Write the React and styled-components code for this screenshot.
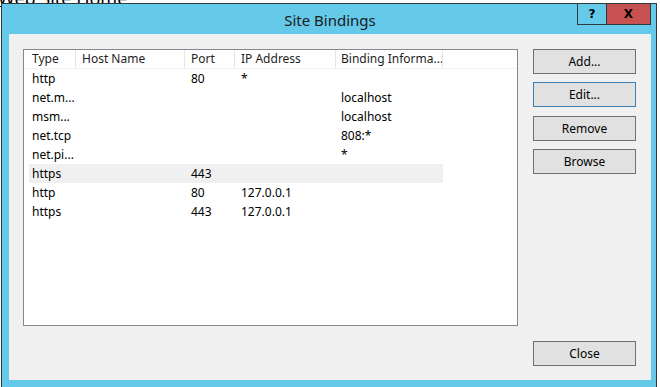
import React from "react";
import styled, { createGlobalStyle } from "styled-components";

const GlobalStyle = createGlobalStyle`
  html, body {
    margin: 0;
    padding: 0;
    background: #ffffff;
  }
  body {
    font-family: "Segoe UI", "Noto Sans", sans-serif;
    font-size: 12px;
    color: #000000;
  }
`;

// desktop behind the dialog
const Desktop = styled.div`
  position: relative;
  width: 660px;
  height: 387px;
  overflow: hidden;
  background: #ffffff;
`;

const BackText = styled.div`
  position: absolute;
  left: -2px;
  top: -14px;
  font-family: "Noto Sans", sans-serif;
  font-size: 18px;
  color: #000000;
  text-decoration: underline;
`;

const Window = styled.div`
  position: absolute;
  left: 1px;
  top: 3px;
  width: 656px;
  height: 390px;
  box-sizing: border-box;
  background: #65c9ea;
  border: 1px solid #2d3a40;
  padding: 0 5px 0 7px;
`;

const TitleBar = styled.div`
  position: relative;
  height: 30px;
  display: flex;
  align-items: center;
  justify-content: center;
`;

const Title = styled.div`
  font-size: 15px;
  color: #1a1a1a;
  padding-top: 1px;
`;

const CaptionButtons = styled.div`
  position: absolute;
  top: -1px;
  right: 0;
  display: flex;
`;

const CaptionButton = styled.div`
  width: ${(p) => p.$w}px;
  height: 22px;
  box-sizing: border-box;
  border: 1px solid #2d3a40;
  border-left-width: ${(p) => (p.$first ? 1 : 0)}px;
  background: ${(p) => p.$bg};
  display: flex;
  align-items: center;
  justify-content: center;
  font-family: "DejaVu Sans", sans-serif;
  font-weight: bold;
  font-size: 12px;
  color: #000000;
`;

const Client = styled.div`
  background: #f0f0f0;
  height: 346px;
  box-sizing: border-box;
  padding: 15px 15px 14px 14px;
  display: grid;
  grid-template-columns: 495px 103px;
  grid-template-rows: 277px 25px;
  column-gap: 15px;
  row-gap: 15px;
  justify-content: space-between;
`;

const ListBox = styled.div`
  background: #ffffff;
  border: 1px solid #828790;
  box-sizing: border-box;
  overflow: hidden;
`;

const HeaderRow = styled.div`
  display: flex;
  height: 19px;
  box-sizing: border-box;
  border-bottom: 1px solid #f2f2f2;
`;

const HeaderCell = styled.div`
  width: ${(p) => p.$w}px;
  box-sizing: border-box;
  padding-left: ${(p) => p.$pad}px;
  border-right: 1px solid #e5e5e5;
  line-height: 18px;
  white-space: nowrap;
  overflow: hidden;
  color: #1e1e1e;
`;

const Row = styled.div`
  display: flex;
  height: 19px;
  margin-left: 5px;
  width: 414px;
  background: ${(p) => (p.$selected ? "#f0f0f0" : "transparent")};
`;

const Cell = styled.div`
  width: ${(p) => p.$w}px;
  box-sizing: border-box;
  padding-left: ${(p) => p.$pad}px;
  line-height: 19px;
  white-space: nowrap;
  overflow: hidden;
`;

const ButtonColumn = styled.div`
  display: flex;
  flex-direction: column;
`;

const Button = styled.button`
  width: 103px;
  height: 25px;
  margin-bottom: ${(p) => p.$mb || 0}px;
  box-sizing: border-box;
  background: #e1e1e1;
  border: 1px solid ${(p) => (p.$focused ? "#3c7fb1" : "#707070")};
  font-family: inherit;
  font-size: 12px;
  color: #000000;
  padding: 0;
`;

const Footer = styled.div`
  grid-column: 2;
  display: flex;
  justify-content: flex-end;
`;

const headerCols = [
  { label: "Type", w: 52, pad: 8 },
  { label: "Host Name", w: 109, pad: 6 },
  { label: "Port", w: 50, pad: 6 },
  { label: "IP Address", w: 101, pad: 6 },
  { label: "Binding Informa...", w: 107, pad: 5 },
];

const rowCols = [
  { key: "type", w: 47, pad: 3 },
  { key: "host", w: 109, pad: 6 },
  { key: "port", w: 50, pad: 6 },
  { key: "ip", w: 101, pad: 6 },
  { key: "info", w: 107, pad: 5 },
];

const bindings = [
  { type: "http", host: "", port: "80", ip: "*", info: "" },
  { type: "net.m...", host: "", port: "", ip: "", info: "localhost" },
  { type: "msm...", host: "", port: "", ip: "", info: "localhost" },
  { type: "net.tcp", host: "", port: "", ip: "", info: "808:*" },
  { type: "net.pi...", host: "", port: "", ip: "", info: "*" },
  { type: "https", host: "", port: "443", ip: "", info: "", selected: true },
  { type: "http", host: "", port: "80", ip: "127.0.0.1", info: "" },
  { type: "https", host: "", port: "443", ip: "127.0.0.1", info: "" },
];

const App = () => {
  return (
    <Desktop>
      <GlobalStyle />
      <BackText>Web Site Home</BackText>
      <Window>
        <TitleBar>
          <Title>Site Bindings</Title>
          <CaptionButtons>
            <CaptionButton $w={30} $bg="#65c9ea" $first>
              ?
            </CaptionButton>
            <CaptionButton $w={44} $bg="#c75050">
              X
            </CaptionButton>
          </CaptionButtons>
        </TitleBar>
        <Client>
          <ListBox>
            <HeaderRow>
              {headerCols.map((c) => (
                <HeaderCell key={c.label} $w={c.w} $pad={c.pad}>
                  {c.label}
                </HeaderCell>
              ))}
            </HeaderRow>
            {bindings.map((b, i) => (
              <Row key={i} $selected={b.selected}>
                {rowCols.map((c) => (
                  <Cell key={c.key} $w={c.w} $pad={c.pad}>
                    {b[c.key]}
                  </Cell>
                ))}
              </Row>
            ))}
          </ListBox>
          <ButtonColumn>
            <Button $mb={8}>Add...</Button>
            <Button $mb={9} $focused>
              Edit...
            </Button>
            <Button $mb={8}>Remove</Button>
            <Button>Browse</Button>
          </ButtonColumn>
          <Footer>
            <Button>Close</Button>
          </Footer>
        </Client>
      </Window>
    </Desktop>
  );
};

export default App;
